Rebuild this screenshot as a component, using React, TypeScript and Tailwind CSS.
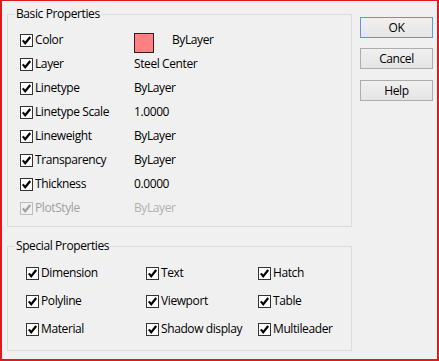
import React from "react";

const basic = [
  { label: "Color", value: "ByLayer", swatch: true },
  { label: "Layer", value: "Steel Center" },
  { label: "Linetype", value: "ByLayer" },
  { label: "Linetype Scale", value: "1.0000" },
  { label: "Lineweight", value: "ByLayer" },
  { label: "Transparency", value: "ByLayer" },
  { label: "Thickness", value: "0.0000" },
  { label: "PlotStyle", value: "ByLayer", disabled: true },
];

const special = [
  ["Dimension", "Text", "Hatch"],
  ["Polyline", "Viewport", "Table"],
  ["Material", "Shadow display", "Multileader"],
];

function Check({ disabled }: { disabled?: boolean }) {
  return (
    <span
      className={`flex h-[13px] w-[13px] shrink-0 items-center justify-center border ${
        disabled ? "border-[#bcbcbc] bg-[#f0f0f0]" : "border-[#333333] bg-white"
      }`}
    >
      <svg width="11" height="11" viewBox="0 0 11 11">
        <path
          d="M1.8 5.4 L4.2 8.2 L9.2 2"
          fill="none"
          stroke={disabled ? "#a0a0a0" : "#000"}
          strokeWidth="2.2"
        />
      </svg>
    </span>
  );
}

function GroupBox({ title, children, className }: { title: string; children: React.ReactNode; className?: string }) {
  return (
    <div className={`border border-[#dcdcdc] ${className ?? ""}`}>
      <div className="-mt-[9px] ml-[7px] w-fit bg-[#f0f0f0] px-[1px] leading-[16px]">{title}</div>
      {children}
    </div>
  );
}

function Button({ label, primary }: { label: string; primary?: boolean }) {
  return (
    <button
      className={`h-[21px] w-[73px] border bg-gradient-to-b from-[#f0f0f0] to-[#e5e5e5] text-center leading-[19px] ${
        primary ? "border-[#5a9ad8]" : "border-[#acacac]"
      }`}
    >
      {label}
    </button>
  );
}

export default function App() {
  return (
    <div
      className="flex h-[361px] w-[439px] border-t border-b-2 border-l-2 border-r-2 border-[#e0191f] bg-[#f0f0f0] text-[12px] tracking-[-0.4px] text-black"
      style={{ fontFamily: '"Open Sans", "Noto Sans", sans-serif' }}
    >
      <div className="flex w-[350px] flex-col pl-[5px] pt-[13px]">
        <GroupBox title="Basic Properties" className="h-[213px]">
          <div className="mt-[6px] flex flex-col pl-[12px]">
            {basic.map((r) => (
              <div key={r.label} className="flex h-[24px] items-center">
                <div className="flex w-[114px] items-center">
                  <Check disabled={r.disabled} />
                  <span className={`ml-[2px] ${r.disabled ? "text-[#a0a0a0]" : ""}`}>{r.label}</span>
                </div>
                {r.swatch && (
                  <span className="mr-[18px] mt-[6px] h-[20px] w-[20px] border border-[#3a1a1a] bg-[#ff8080]" />
                )}
                <span className={r.disabled ? "text-[#b0b0b0]" : ""}>{r.value}</span>
              </div>
            ))}
          </div>
        </GroupBox>
        <GroupBox title="Special Properties" className="mt-[19px] h-[105px]">
          <div className="mt-[5px] grid grid-cols-[120px_112px_1fr] pl-[18px]">
            {special.flat().map((label) => (
              <div key={label} className="flex h-[28px] items-center">
                <Check />
                <span className="ml-[2px]">{label}</span>
              </div>
            ))}
          </div>
        </GroupBox>
      </div>
      <div className="ml-[8px] flex flex-col gap-[10px] pt-[16px]">
        <Button label="OK" primary />
        <Button label="Cancel" />
        <div className="mt-[1px]">
          <Button label="Help" />
        </div>
      </div>
    </div>
  );
}
